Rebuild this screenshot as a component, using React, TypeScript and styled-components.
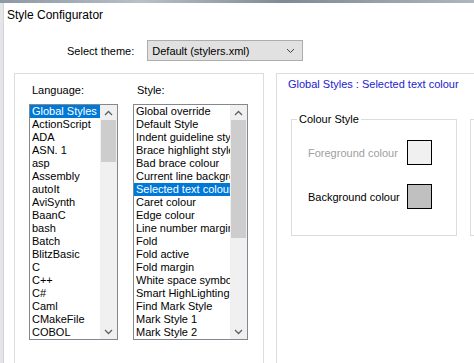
import styled, { createGlobalStyle } from 'styled-components';

const GlobalStyle = createGlobalStyle`
  html, body {
    margin: 0;
    padding: 0;
    background: #ffffff;
  }
  * {
    box-sizing: border-box;
  }
`;

const languages = [
  'Global Styles', 'ActionScript', 'ADA', 'ASN. 1', 'asp', 'Assembly', 'autoIt',
  'AviSynth', 'BaanC', 'bash', 'Batch', 'BlitzBasic', 'C', 'C++', 'C#', 'Caml',
  'CMakeFile', 'COBOL',
];

const styles = [
  'Global override', 'Default Style', 'Indent guideline style', 'Brace highlight style',
  'Bad brace colour', 'Current line background colour', 'Selected text colour',
  'Caret colour', 'Edge colour', 'Line number margin', 'Fold', 'Fold active',
  'Fold margin', 'White space symbol', 'Smart HighLighting', 'Find Mark Style',
  'Mark Style 1', 'Mark Style 2',
];

const Screen = styled.div`
  width: 474px;
  height: 363px;
  overflow: hidden;
  display: flex;
  flex-direction: column;
  background: #ffffff;
  font-family: "Liberation Sans", Arial, sans-serif;
  font-size: 11px;
  color: #000;
`;

const Backdrop = styled.div`
  height: 3px;
  flex: none;
  background: linear-gradient(90deg, #8d98a4, #b8c0c8 30%, #7f8a96 60%, #aeb6bf);
`;

const Body = styled.div`
  flex: 1;
  display: flex;
  min-height: 0;
`;

const SideStrip = styled.div`
  width: 4px;
  flex: none;
  background: #e3e5e8;
  border-right: 1px solid #d2d4d8;
`;

const Dialog = styled.div`
  flex: 1;
  display: flex;
  flex-direction: column;
  min-width: 0;
  background: #ffffff;
`;

const TitleBar = styled.div`
  height: 25px;
  flex: none;
  display: flex;
  align-items: center;
  padding: 0 0 2px 3px;
  font-size: 12px;
`;

const ThemeRow = styled.div`
  display: flex;
  align-items: center;
  gap: 13px;
  margin: 12px 0 0 63px;
  flex: none;
`;

const Combo = styled.div`
  width: 156px;
  height: 21px;
  display: flex;
  align-items: center;
  justify-content: space-between;
  padding: 0 7px 0 4px;
  background: #e1e1e1;
  border: 1px solid #adadad;
`;

const Panels = styled.div`
  display: flex;
  gap: 12px;
  margin: 12px 0 0 10px;
  flex: none;
`;

const LeftPanel = styled.div`
  width: 250px;
  height: 310px;
  flex: none;
  border: 1px solid #dcdcdc;
  display: flex;
  gap: 15px;
  padding: 10px 0 0 14px;
`;

const Column = styled.div`
  display: flex;
  flex-direction: column;
`;

const Heading = styled.div<{ $indent: number }>`
  height: 13px;
  line-height: 13px;
  padding-left: ${(p) => p.$indent}px;
  margin-bottom: 7px;
`;

const ListBox = styled.div<{ $width: number }>`
  width: ${(p) => p.$width}px;
  height: 236px;
  border: 1px solid #828790;
  display: flex;
  background: #fff;
`;

const Items = styled.div`
  flex: 1;
  min-width: 0;
  overflow: hidden;
`;

const Item = styled.div<{ $selected?: boolean }>`
  height: 13px;
  line-height: 13px;
  padding-left: 2px;
  white-space: nowrap;
  overflow: hidden;
  background: ${(p) => (p.$selected ? '#0078d7' : 'transparent')};
  color: ${(p) => (p.$selected ? '#ffffff' : '#000000')};
`;

const ScrollBar = styled.div`
  width: 17px;
  flex: none;
  background: #f0f0f0;
  display: flex;
  flex-direction: column;
  align-items: center;
`;

const Arrow = styled.div`
  height: 15px;
  flex: none;
  display: flex;
  align-items: center;
  justify-content: center;
`;

const Thumb = styled.div<{ $length: number }>`
  width: 15px;
  height: ${(p) => p.$length}px;
  flex: none;
  background: #cdcdcd;
`;

const Spacer = styled.div`
  flex: 1;
`;

const RightPanel = styled.div`
  width: 260px;
  height: 310px;
  flex: none;
  border: 1px solid #dcdcdc;
  padding: 4px 0 0 11px;
`;

const StyleTitle = styled.div`
  height: 13px;
  line-height: 13px;
  color: #2222cc;
  white-space: nowrap;
`;

const Groups = styled.div`
  display: flex;
  gap: 13px;
  margin: 22px 0 0 3px;
`;

const GroupBox = styled.fieldset<{ $width: number }>`
  width: ${(p) => p.$width}px;
  height: 123px;
  flex: none;
  margin: 0;
  padding: 0 0 0 16px;
  border: 1px solid #dcdcdc;
  min-inline-size: 0;
`;

const Legend = styled.legend`
  padding: 0 2px;
  margin-left: -11px;
  line-height: 13px;
  font-size: 11px;
`;

const SwatchRow = styled.div<{ $top: number }>`
  display: flex;
  align-items: center;
  margin-top: ${(p) => p.$top}px;
`;

const SwatchLabel = styled.div<{ $disabled?: boolean }>`
  width: 99px;
  color: ${(p) => (p.$disabled ? '#a0a0a0' : '#000000')};
  white-space: nowrap;
`;

const Swatch = styled.div<{ $color: string }>`
  width: 25px;
  height: 25px;
  border: 1px solid #000;
  background: ${(p) => p.$color};
`;

const UpArrow = () => (
  <svg width="9" height="6" viewBox="0 0 9 6">
    <path d="M1 5 L4.5 1.5 L8 5" fill="none" stroke="#606060" strokeWidth="1.3" />
  </svg>
);

const DownArrow = () => (
  <svg width="9" height="6" viewBox="0 0 9 6">
    <path d="M1 1 L4.5 4.5 L8 1" fill="none" stroke="#606060" strokeWidth="1.3" />
  </svg>
);

const List = ({ items, selected, width, thumb }: { items: string[]; selected: number; width: number; thumb: number }) => (
  <ListBox $width={width}>
    <Items>
      {items.map((it, i) => (
        <Item key={it} $selected={i === selected}>{it}</Item>
      ))}
    </Items>
    <ScrollBar>
      <Arrow><UpArrow /></Arrow>
      <Thumb $length={thumb} />
      <Spacer />
      <Arrow><DownArrow /></Arrow>
    </ScrollBar>
  </ListBox>
);

const App = () => (
  <>
    <GlobalStyle />
    <Screen>
      <Backdrop />
      <Body>
        <SideStrip />
        <Dialog>
          <TitleBar>Style Configurator</TitleBar>
          <ThemeRow>
            <span>Select theme:</span>
            <Combo>
              <span>Default (stylers.xml)</span>
              <svg width="9" height="6" viewBox="0 0 9 6">
                <path d="M1 1 L4.5 4.5 L8 1" fill="none" stroke="#404040" strokeWidth="1" />
              </svg>
            </Combo>
          </ThemeRow>
          <Panels>
            <LeftPanel>
              <Column>
                <Heading $indent={3}>Language:</Heading>
                <List items={languages} selected={0} width={89} thumb={42} />
              </Column>
              <Column>
                <Heading $indent={4}>Style:</Heading>
                <List items={styles} selected={6} width={115} thumb={118} />
              </Column>
            </LeftPanel>
            <RightPanel>
              <StyleTitle>Global Styles : Selected text colour</StyleTitle>
              <Groups>
                <GroupBox $width={166}>
                  <Legend>Colour Style</Legend>
                  <SwatchRow $top={14}>
                    <SwatchLabel $disabled>Foreground colour</SwatchLabel>
                    <Swatch $color="#f0f0f0" />
                  </SwatchRow>
                  <SwatchRow $top={19}>
                    <SwatchLabel>Background colour</SwatchLabel>
                    <Swatch $color="#c0c0c0" />
                  </SwatchRow>
                </GroupBox>
                <GroupBox $width={160}>
                  <Legend>Font Style</Legend>
                </GroupBox>
              </Groups>
            </RightPanel>
          </Panels>
        </Dialog>
      </Body>
    </Screen>
  </>
);

export default App;
